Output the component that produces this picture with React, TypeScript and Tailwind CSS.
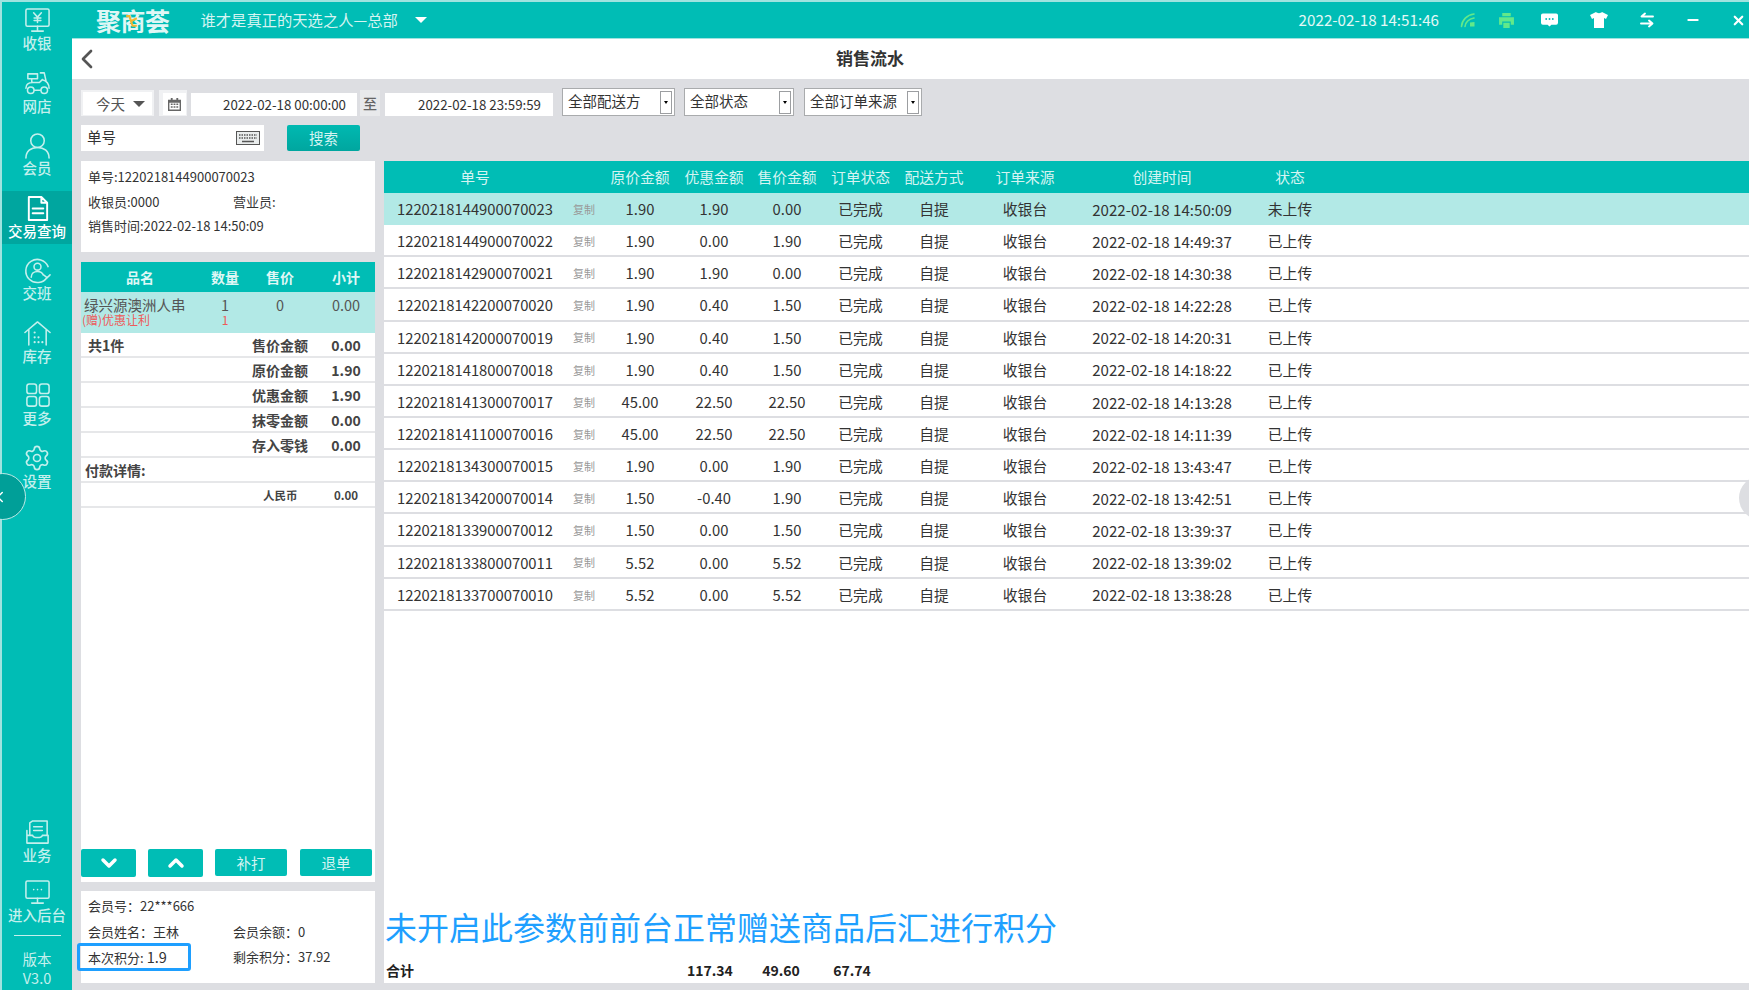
import React from 'react';
import { ChevronLeft, ChevronDown, ChevronUp, Settings, X, Minus } from 'lucide-react';

const FONT = "font-['Noto_Sans_CJK_SC','Noto_Sans',sans-serif]";
const COLS = 'grid grid-cols-[182px_36px_76px_72px_74px_73px_74px_108px_166px_90px] items-center text-center';

const orders = [
  ['1220218144900070023', '1.90', '1.90', '0.00', '14:50:09', '未上传'],
  ['1220218144900070022', '1.90', '0.00', '1.90', '14:49:37', '已上传'],
  ['1220218142900070021', '1.90', '1.90', '0.00', '14:30:38', '已上传'],
  ['1220218142200070020', '1.90', '0.40', '1.50', '14:22:28', '已上传'],
  ['1220218142000070019', '1.90', '0.40', '1.50', '14:20:31', '已上传'],
  ['1220218141800070018', '1.90', '0.40', '1.50', '14:18:22', '已上传'],
  ['1220218141300070017', '45.00', '22.50', '22.50', '14:13:28', '已上传'],
  ['1220218141100070016', '45.00', '22.50', '22.50', '14:11:39', '已上传'],
  ['1220218134300070015', '1.90', '0.00', '1.90', '13:43:47', '已上传'],
  ['1220218134200070014', '1.50', '-0.40', '1.90', '13:42:51', '已上传'],
  ['1220218133900070012', '1.50', '0.00', '1.50', '13:39:37', '已上传'],
  ['1220218133800070011', '5.52', '0.00', '5.52', '13:39:02', '已上传'],
  ['1220218133700070010', '5.52', '0.00', '5.52', '13:38:28', '已上传'],
];

const headers = ['单号', '', '原价金额', '优惠金额', '售价金额', '订单状态', '配送方式', '订单来源', '创建时间', '状态'];

const summary = [
  ['共1件', '售价金额', '0.00'],
  ['', '原价金额', '1.90'],
  ['', '优惠金额', '1.90'],
  ['', '抹零金额', '0.00'],
  ['', '存入零钱', '0.00'],
];

const Icon = ({ children }: { children: React.ReactNode }) => (
  <svg viewBox="0 0 28 28" className="w-[27px] h-[27px]" fill="none" stroke="currentColor" strokeWidth="1.6" strokeLinecap="round" strokeLinejoin="round">
    {children}
  </svg>
);

const icons: Record<string, React.ReactNode> = {
  cash: (
    <Icon>
      <rect x="2" y="2" width="24" height="18" rx="1.5" />
      <path d="M14 20v4M8 25h12M10 6l4 4.5L18 6M14 10.5V16M10.5 11.5h7M10.5 14h7" />
    </Icon>
  ),
  shop: (
    <Icon>
      <path d="M4 4h10v5H4zM17 3h4l2 9M8 9v4M2 19c0-4 3-6 7-6h7l3-3M19 10c4 1 7 4 7 9" />
      <circle cx="7" cy="21" r="3.4" />
      <circle cx="21" cy="21" r="3.4" />
      <path d="M11 21h6" />
    </Icon>
  ),
  member: (
    <Icon>
      <circle cx="14" cy="9" r="7" />
      <path d="M2 27c0-7 5-11 12-11s12 4 12 11" />
    </Icon>
  ),
  order: (
    <Icon>
      <path d="M5 2h13l6 6v18H5zM18 2v6h6M9 14h11M9 19h11" strokeWidth="2" />
    </Icon>
  ),
  shift: (
    <Icon>
      <path d="M24 21A12 12 0 1 1 25 10" />
      <circle cx="14" cy="10" r="3.6" />
      <path d="M7.5 21c0-4 3-6 6.500-6s5 1 6 3.500M21 19l3 2.500 3-3" />
    </Icon>
  ),
  stock: (
    <Icon>
      <path d="M1 13 14 2l13 11M5 10v16M23 10v16" />
      <path d="M11 13h.1M11 18h.1M11 23h.1M15 18h.1M15 23h.1M19 23h.1" strokeWidth="2.2" />
    </Icon>
  ),
  more: (
    <Icon>
      <rect x="3" y="2" width="10" height="10" rx="2.500" />
      <rect x="16" y="2" width="10" height="10" rx="2.500" />
      <rect x="3" y="15" width="10" height="10" rx="2.500" />
      <rect x="16" y="15" width="10" height="10" rx="2.500" />
    </Icon>
  ),
  settings: <Settings className="w-[28px] h-[28px]" strokeWidth={1.4} />,
  biz: (
    <Icon>
      <path d="M6 17V4l3-2h15v15M10 8h9M10 12h9M3 12v13h22v-8h-6c-1 3-9 3-10 0H3" />
    </Icon>
  ),
  admin: (
    <Icon>
      <rect x="2" y="2" width="24" height="18" rx="1.500" />
      <path d="M14 20v5M8 25h12M10 11h.1M14 11h.1M18 11h.1" />
    </Icon>
  ),
};

const NavItem = ({ icon, label, active }: { icon: string; label: string; active?: boolean }) => (
  <div className={`h-[53px] flex flex-col items-center pt-[4px] ${active ? 'bg-[#00a69f] text-white' : 'text-[#c4f0ed]'}`}>
    <div className="h-[27px] flex items-center justify-center">{icons[icon]}</div>
    <span className="-mt-[1px] text-[14.5px] leading-[20px] font-medium whitespace-nowrap">{label}</span>
  </div>
);

const Caret = ({ className }: { className: string }) => (
  <span className={`w-0 h-0 border-x-[6px] border-x-transparent border-t-[6px] ${className}`} />
);

const Select = ({ label, width }: { label: string; width: string }) => (
  <div className={`h-[28px] ${width} bg-white border border-[#a9abad] flex items-center justify-between pl-[5px] pr-[2px] shrink-0`}>
    <span className="text-[14.5px] text-[#333] -mt-[3px] whitespace-nowrap">{label}</span>
    <span className="w-[12px] h-[23px] border border-[#9c9ea1] flex items-center justify-center">
      <span className="w-0 h-0 border-x-[2.5px] border-x-transparent border-t-[3px] border-t-black" />
    </span>
  </div>
);

const TopIcons = () => (
  <div className="flex items-center text-white">
    <svg viewBox="0 0 16 16" className="w-[16px] h-[16px] ml-[21px]" fill="none" stroke="#62e98a" strokeWidth="1.6" strokeLinecap="round">
      <path d="M1.500 14.500C2 8 7 3 14 2M5 14.500C5.500 10.500 9 7 14 6" />
      <path d="M10 14.500v-4l4.500-.5v4.500z" fill="#62e98a" stroke="none" />
    </svg>
    <svg viewBox="0 0 16 16" className="w-[17px] h-[17px] ml-[22px]" fill="#62e98a">
      <path d="M4 1h8v3H4zM1 5h14v7h-3V9H4v3H1zM5 10h6v5H5z" />
    </svg>
    <svg viewBox="0 0 18 14" className="w-[17px] h-[14px] ml-[26px]" fill="white">
      <path d="M2 0h14a2 2 0 0 1 2 2v8a2 2 0 0 1-2 2h-5l-2 2-2-2H2a2 2 0 0 1-2-2V2a2 2 0 0 1 2-2z" />
      <circle cx="5.500" cy="6" r="1" fill="#00bdb5" />
      <circle cx="9" cy="6" r="1" fill="#00bdb5" />
      <circle cx="12.500" cy="6" r="1" fill="#00bdb5" />
    </svg>
    <svg viewBox="0 0 18 16" className="w-[18px] h-[16px] ml-[32px]" fill="white">
      <path d="M6 0c1 1.500 5 1.500 6 0l6 3-2 4-2-1v10H4V6L2 7 0 3z" />
    </svg>
    <svg viewBox="0 0 16 16" className="w-[16px] h-[16px] ml-[31px]" fill="none" stroke="white" strokeWidth="1.900" strokeLinecap="round" strokeLinejoin="round">
      <path d="M14 4.500H3M6 1.500l-3.500 3M2 11.500h11M10 8.500l3.500 3L10 14.500" />
    </svg>
    <Minus className="w-[16px] h-[16px] ml-[30px]" strokeWidth={3} />
    <X className="w-[15px] h-[15px] ml-[30px]" strokeWidth={3.500} />
  </div>
);

const App = () => {
  return (
    <div className={`relative h-screen w-full overflow-hidden bg-[#9fe3df] flex pt-[2px] pl-[2px] ${FONT}`}>
      {/* sidebar */}
      <aside className="w-[70px] shrink-0 bg-[#00bdb5] flex flex-col">
        <div className="flex flex-col gap-[9.500px] pt-[1px]">
          <NavItem icon="cash" label="收银" />
          <NavItem icon="shop" label="网店" />
          <NavItem icon="member" label="会员" />
          <NavItem icon="order" label="交易查询" active />
          <NavItem icon="shift" label="交班" />
          <NavItem icon="stock" label="库存" />
          <NavItem icon="more" label="更多" />
          <NavItem icon="settings" label="设置" />
        </div>
        <div className="mt-auto flex flex-col items-center pb-[2px]">
          <NavItem icon="biz" label="业务" />
          <div className="mt-[7px]">
            <NavItem icon="admin" label="进入后台" />
          </div>
          <div className="w-[47px] h-px bg-[#c4f0ed] mt-[7px]" />
          <div className="text-[14.500px] leading-[20px] text-[#c4f0ed] mt-[13px] text-center">版本</div>
          <div className="text-[14.500px] leading-[20px] text-[#c4f0ed] mt-[-1px] text-center">V3.0</div>
        </div>
      </aside>

      <main className="flex-1 min-w-0 flex flex-col">
        {/* top bar */}
        <header className="h-[36px] shrink-0 bg-[#00bdb5] flex items-center pl-[24px] pr-[3px] text-white">
          <div className="relative text-[25px] leading-[34px] font-bold tracking-[-0.5px] text-[#dff7f5]">
            聚商荟
            <svg viewBox="0 0 12 14" className="absolute left-[29px] top-[11px] w-[13px] h-[15px]" fill="none" stroke="#f2b632" strokeWidth="2">
              <path d="M1 2h3l3 9h4M5 7l6-3" />
            </svg>
          </div>
          <span className="ml-[31px] -mt-[2px] text-[15.300px] text-[#d5f4f2] whitespace-nowrap">谁才是真正的天选之人—总部</span>
          <Caret className="ml-[17px] border-t-white" />
          <span className="ml-auto -mt-[2px] text-[15.200px] text-[#e3f8f6] whitespace-nowrap">2022-02-18 14:51:46</span>
          <TopIcons />
        </header>

        {/* page title */}
        <div className="mt-px h-[40px] shrink-0 bg-white relative flex items-center justify-center">
          <ChevronLeft className="absolute left-[-1px] w-[32px] h-[32px] text-[#555]" strokeWidth={2} />
          <h1 className="mr-[81px] -mt-[2px] text-[17px] font-bold text-[#333]">销售流水</h1>
        </div>

        <div className="flex-1 min-h-0 flex flex-col bg-[#dddee2] pl-[9px] pt-[9px] pb-[7px]">
          {/* filters */}
          <div className="h-[28px] flex items-end shrink-0">
            <div className="h-[26px] w-[73px] bg-[#f0f1f3] p-[2px] pb-[1px] shrink-0">
              <div className="h-full bg-white flex items-center justify-center gap-[8px] pl-[6px] text-[14.500px] text-[#555]">
                今天
                <Caret className="border-t-[#555]" />
              </div>
            </div>
            <div className="h-[26px] w-[28px] ml-[5px] bg-[#f0f1f3] pl-[4px] pt-[3px] pb-[1px] pr-[1px] shrink-0">
              <div className="h-full bg-white flex items-center justify-center text-[#666]">
                <svg viewBox="0 0 14 14" className="w-[13px] h-[13px]" fill="currentColor">
                  <path d="M3 0h2v2h4V0h2v2h3v12H0V2h3zM1.500 5v7.500h11V5z" />
                  <path d="M3 6h2v1.500H3zM6 6h2v1.500H6zM9 6h2v1.500H9zM3 9h2v1.500H3zM6 9h2v1.500H6zM9 9h2v1.500H9z" />
                </svg>
              </div>
            </div>
            <div className="h-[23px] w-[166px] ml-[4px] bg-white flex items-center justify-end pr-[11px] text-[13.300px] text-[#333] shrink-0">2022-02-18 00:00:00</div>
            <div className="h-[26px] w-[20px] ml-[3px] bg-[#e8e9eb] flex items-center justify-center text-[14px] font-medium text-[#666] shrink-0">至</div>
            <div className="h-[23px] w-[168px] ml-[5px] bg-white flex items-center justify-end pr-[12px] text-[13.300px] text-[#333] shrink-0">2022-02-18 23:59:59</div>
            <div className="w-[9px] shrink-0" />
            <Select label="全部配送方" width="w-[113px]" />
            <div className="w-[9px] shrink-0" />
            <Select label="全部状态" width="w-[110px]" />
            <div className="w-[10px] shrink-0" />
            <Select label="全部订单来源" width="w-[118px]" />
          </div>

          {/* search */}
          <div className="mt-[9px] h-[26px] flex shrink-0">
            <div className="w-[183px] bg-white flex items-center justify-between pl-[6px] pr-[4px]">
              <span className="text-[14.500px] text-[#333] -mt-[2px]">单号</span>
              <svg viewBox="0 0 24 14" className="w-[24px] h-[14px]" fill="none" stroke="#555">
                <rect x="0.500" y="0.500" width="23" height="13" fill="#e9ecec" />
                <path d="M3 4h18M3 7h18" strokeDasharray="1.500 1" strokeWidth="1.500" />
                <path d="M6 10.500h12" strokeWidth="1.500" />
              </svg>
            </div>
            <button className="ml-[23px] w-[73px] rounded-[2px] bg-gradient-to-b from-[#00b9b1] to-[#00a69f] text-[14.500px] text-[#d5f4f2]">搜索</button>
          </div>

          <div className="mt-[10px] flex-1 min-h-0 flex gap-[9px]">
            {/* left column */}
            <div className="w-[294px] shrink-0 flex flex-col text-[#444]">
              <div className="h-[91px] shrink-0 bg-white pl-[7px] pt-[4px] text-[13px] leading-[24.500px] text-[#333]">
                <div>单号:1220218144900070023</div>
                <div className="flex">
                  <span className="w-[145px]">收银员:0000</span>
                  <span>营业员:</span>
                </div>
                <div>销售时间:2022-02-18 14:50:09</div>
              </div>

              <div className="mt-[10px] flex-1 min-h-0 bg-white flex flex-col">
                <div className="h-[30px] shrink-0 bg-[#00bdb5] grid grid-cols-[118px_52px_58px_66px] items-center text-center text-[14px] font-bold text-[#dff7f5]">
                  <span>品名</span>
                  <span>数量</span>
                  <span>售价</span>
                  <span className="pl-[8px]">小计</span>
                </div>
                <div className="h-[41px] shrink-0 bg-[#b2e9e6] grid grid-cols-[118px_52px_58px_66px] text-center text-[14.500px] leading-[17px] text-[#555] pt-[4px]">
                  <div className="text-left">
                    <div className="pl-[3px] whitespace-nowrap">绿兴源澳洲人串</div>
                    <div className="pl-[1px] text-[12px] leading-[13px] text-[#ee5a5a] whitespace-nowrap">(赠)优惠让利</div>
                  </div>
                  <div>
                    <div>1</div>
                    <div className="text-[12px] leading-[13px] text-[#ee5a5a]">1</div>
                  </div>
                  <div>0</div>
                  <div className="pl-[8px]">0.00</div>
                </div>
                {summary.map((row) => (
                  <div key={row[1]} className="h-[25px] shrink-0 pt-[2px] border-b-2 border-[#e6e7e9] grid grid-cols-[171px_65px_58px] items-center text-[14px] font-bold">
                    <span className="pl-[7px]">{row[0]}</span>
                    <span>{row[1]}</span>
                    <span className="text-center">{row[2]}</span>
                  </div>
                ))}
                <div className="h-[25px] shrink-0 pt-[2px] border-b-2 border-[#e6e7e9] flex items-center pl-[4px] text-[14px] font-bold">付款详情:</div>
                <div className="h-[25px] shrink-0 pt-[2px] border-b-2 border-[#e6e7e9] grid grid-cols-[171px_65px_58px] items-center text-[11.500px] font-bold">
                  <span />
                  <span className="pl-[11px]">人民币</span>
                  <span className="text-center">0.00</span>
                </div>
                <div className="mt-auto h-[33px] shrink-0 flex items-start">
                  <button className="w-[55px] h-[28px] rounded-[2px] bg-[#00bdb5] flex items-center justify-center text-white">
                    <ChevronDown className="w-[24px] h-[24px]" strokeWidth={3.500} />
                  </button>
                  <button className="ml-[12px] w-[55px] h-[28px] rounded-[2px] bg-[#00bdb5] flex items-center justify-center text-white">
                    <ChevronUp className="w-[24px] h-[24px]" strokeWidth={3.500} />
                  </button>
                  <button className="ml-[12px] w-[72px] h-[27px] rounded-[2px] bg-[#00bdb5] text-[14.500px] text-[#d5f4f2]">补打</button>
                  <button className="ml-[13px] w-[72px] h-[27px] rounded-[2px] bg-[#00bdb5] text-[14.500px] text-[#d5f4f2]">退单</button>
                </div>
              </div>

              <div className="mt-[9px] h-[92px] shrink-0 bg-white pl-[7px] pt-[2px] text-[13px] leading-[25.500px] text-[#333]">
                <div>会员号：22***666</div>
                <div className="flex">
                  <span className="w-[145px]">会员姓名：王林</span>
                  <span>会员余额：0</span>
                </div>
                <div className="flex">
                  <span className="w-[145px]">本次积分:<span className="ml-[3px] text-[14.500px]">1.9</span></span>
                  <span>剩余积分：37.92</span>
                </div>
              </div>
            </div>

            {/* orders */}
            <div className="flex-1 min-w-0 bg-white flex flex-col text-[14.800px] text-[#333]">
              <div className={`${COLS} h-[32px] shrink-0 pt-[1px] bg-[#00bdb5] text-[#d5f4f2]`}>
                {headers.map((h, i) => (
                  <span key={i} className="whitespace-nowrap">{h}</span>
                ))}
              </div>
              {orders.map((o, i) => (
                <div key={o[0]} className={`${COLS} h-[32.150px] shrink-0 ${i === 0 ? 'bg-[#b2e9e6]' : 'pt-[2px] border-b-2 border-[#dddee2]'}`}>
                  <span>{o[0]}</span>
                  <span className="text-[11px] text-[#999]">复制</span>
                  <span>{o[1]}</span>
                  <span>{o[2]}</span>
                  <span>{o[3]}</span>
                  <span>已完成</span>
                  <span>自提</span>
                  <span>收银台</span>
                  <span className="text-[15.100px]">2022-02-18 {o[4]}</span>
                  <span>{o[5]}</span>
                </div>
              ))}
              <div className="mt-auto pl-px text-[32px] leading-[44px] text-[#1e9fff] whitespace-nowrap">未开启此参数前前台正常赠送商品后汇进行积分</div>
              <div className="mt-[12px] mb-[3px] h-[20px] flex items-center text-[14px] font-bold text-[#222]">
                <span className="pl-[2px] w-[303px]">合计</span>
                <span className="w-[45px] text-center">117.34</span>
                <span className="ml-[30px] w-[38px] text-center">49.60</span>
                <span className="ml-[33px] w-[38px] text-center">67.74</span>
              </div>
            </div>
          </div>
        </div>
      </main>

      {/* overlays */}
      <div className="absolute left-[-21px] top-[473px] w-[47px] h-[47px] rounded-full bg-[#009f98] border border-[#bfeae7] flex items-center justify-end pr-[16px] text-white">
        <ChevronLeft className="w-[18px] h-[18px] shrink-0" strokeWidth={2} />
      </div>
      <div className="absolute right-[-34px] top-[476px] w-[44px] h-[44px] rounded-full bg-[#dddee2]" />
      <div className="absolute left-[77px] top-[943px] w-[114px] h-[28px] rounded-[3px] border-[3px] border-[#1e9fff]" />
    </div>
  );
};

export default App;
